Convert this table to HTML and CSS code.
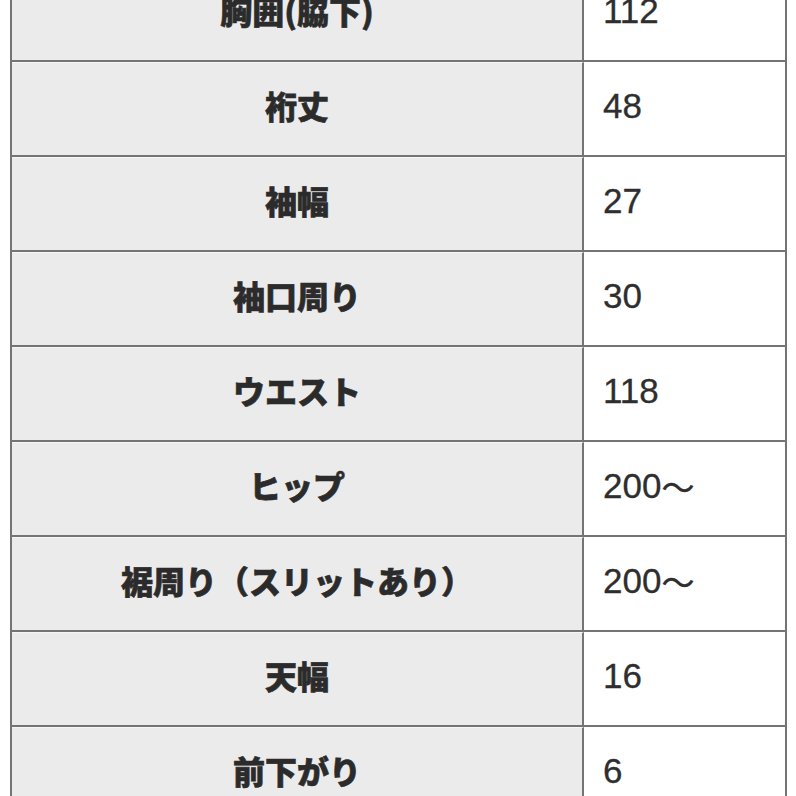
FILE: index.html
```html
<!DOCTYPE html>
<html lang="ja">
<head>
<meta charset="utf-8">
<link rel="stylesheet" href="styles.css">
</head>
<body>
<div class="sheet">
  <div class="row"><div class="key">胸囲(脇下)</div><div class="val">112</div></div>
  <div class="row"><div class="key">裄丈</div><div class="val">48</div></div>
  <div class="row"><div class="key">袖幅</div><div class="val">27</div></div>
  <div class="row"><div class="key">袖口周り</div><div class="val">30</div></div>
  <div class="row"><div class="key">ウエスト</div><div class="val">118</div></div>
  <div class="row"><div class="key">ヒップ</div><div class="val">200<span class="jp">～</span></div></div>
  <div class="row"><div class="key">裾周り（スリットあり）</div><div class="val">200<span class="jp">～</span></div></div>
  <div class="row"><div class="key">天幅</div><div class="val">16</div></div>
  <div class="row"><div class="key">前下がり</div><div class="val">6</div></div>
</div>
</body>
</html>
```
FILE: styles.css
```css
html, body {
  margin: 0;
  padding: 0;
  background: #ffffff;
}
body {
  height: 796px;
  overflow: hidden;
  font-family: "Noto Sans CJK JP", "Noto Sans", sans-serif;
  color: #303030;
}
.sheet {
  margin: -35px 0 0 10px;
  width: 773px;
  border-left: 2px solid #747474;
  border-right: 2px solid #747474;
}
.row {
  display: grid;
  grid-template-columns: 572px 1fr;
  height: 95px;
  box-sizing: border-box;
  border-top: 2px solid #747474;
}
.key {
  background: #ebebeb;
  border-right: 2px solid #747474;
  border-top: 1px solid #f6f6f6;
  display: flex;
  align-items: center;
  justify-content: center;
  padding-bottom: 8px;
  font-weight: 900;
  font-size: 32px;
  color: #2b2b2b;
  -webkit-text-stroke: 0.6px #2b2b2b;
}
.val {
  background: #ffffff;
  display: flex;
  align-items: center;
  padding-left: 19px;
  padding-bottom: 6px;
  font-family: "Liberation Sans", "Noto Sans CJK JP", sans-serif;
  font-size: 35px;
  color: #2e2e2e;
  -webkit-text-stroke: 0.3px #2e2e2e;
}
.jp {
  font-family: "Noto Sans CJK JP", sans-serif;
  font-size: 33px;
}
```
